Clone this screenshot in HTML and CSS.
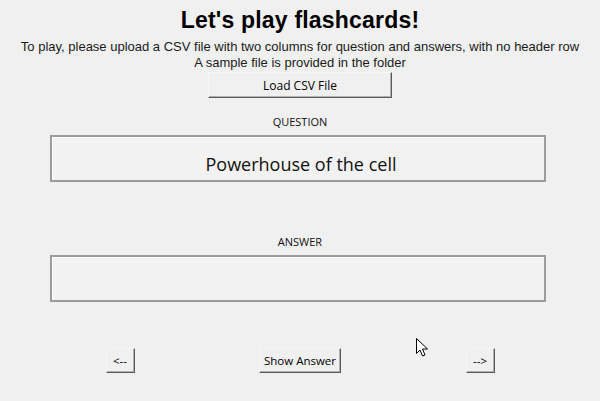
FILE: index.html
```html
<!DOCTYPE html>
<html>
<head>
<meta charset="utf-8">
<title>Flashcards</title>
<link rel="stylesheet" href="styles.css">
</head>
<body>
<div class="app">
  <h1 class="title">Let's play flashcards!</h1>
  <p class="intro">To play, please upload a CSV file with two columns for question and answers, with no header row<br>A sample file is provided in the folder</p>
  <button class="btn btn-load">Load CSV File</button>
  <div class="label label-q">QUESTION</div>
  <div class="card card-q">Powerhouse of the cell</div>
  <div class="label label-a">ANSWER</div>
  <div class="card card-a"></div>
  <div class="nav">
    <button class="btn btn-small">&lt;--</button>
    <button class="btn btn-show">Show Answer</button>
    <button class="btn btn-small">--&gt;</button>
  </div>
  <svg class="cursor" width="13" height="20" viewBox="0 0 13 20">
    <path d="M0.5 0.5 L0.5 15.5 L4 12 L6.5 18 L9 17 L6.5 11 L11.5 11 Z" fill="#fff" stroke="#000" stroke-width="1" stroke-linejoin="round"/>
  </svg>
</div>
</body>
</html>
```

FILE: styles.css
```css
html, body {
  margin: 0;
  padding: 0;
  background: #f0f0f0;
}
.app {
  position: relative;
  width: 600px;
  height: 401px;
  display: flex;
  flex-direction: column;
  align-items: center;
  color: #000;
}
.title {
  margin: 7px 0 0;
  font-family: "Liberation Sans", Arial, sans-serif;
  font-weight: bold;
  font-size: 23px;
  line-height: 26px;
  letter-spacing: 0.2px;
}
.intro {
  margin: 6px 0 0;
  font-family: "Liberation Sans", Arial, sans-serif;
  font-size: 13px;
  line-height: 16px;
  text-align: center;
  color: #1a1a1a;
}
.btn {
  font-family: "Open Sans", "Noto Sans", sans-serif;
  font-size: 11.5px;
  color: #000;
  background: #f0f0f0;
  border-style: solid;
  border-width: 1px;
  border-color: #f6f6f6 #5a5a5a #5a5a5a #f6f6f6;
  box-shadow: inset -1px -1px 0 #b0b0b0;
  padding: 0;
  margin: 0;
  cursor: default;
}
.btn-load {
  margin-top: 1px;
  width: 184px;
  height: 26px;
  font-size: 12px;
}
.label {
  font-family: "Open Sans", "Noto Sans", sans-serif;
  font-size: 11px;
  line-height: 14px;
  color: #111;
}
.label-q {
  margin-top: 17px;
}
.label-a {
  margin-top: 53px;
}
.card {
  box-sizing: border-box;
  width: 496px;
  height: 47px;
  margin: 6px 4px 0 0;
  border: 2px solid #9c9c9c;
  box-shadow: inset 1px 1px 0 #fff;
  background: #f2f2f2;
  text-align: center;
  font-family: "Open Sans", "Noto Sans", sans-serif;
  font-size: 18px;
  color: #111;
  padding: 16px 0 0 6px;
  line-height: 22px;
}
.nav {
  margin-top: 46px;
  width: 540px;
  display: grid;
  grid-template-columns: repeat(3, 180px);
  justify-items: center;
}
.btn-small {
  width: 29px;
  height: 25px;
}
.btn-show {
  width: 82px;
  height: 25px;
}
.cursor {
  position: absolute;
  left: 416px;
  top: 338px;
}
```
